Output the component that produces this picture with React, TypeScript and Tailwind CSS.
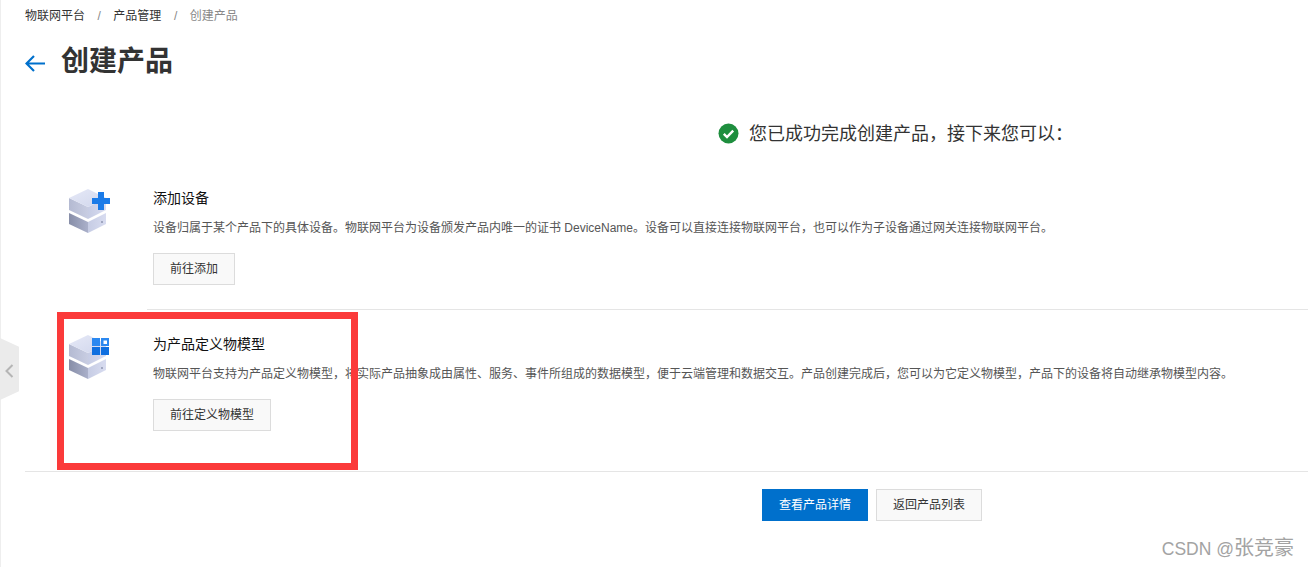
import { ReactNode } from "react"

const font = { cn: "font-['Liberation_Sans','Noto_Sans_CJK_SC',sans-serif]" }

function Cube({ id, children }: { id: string; children: ReactNode }) {
    return (
        <svg width="44" height="44" viewBox="0 0 44 44" className="block">
            <defs>
                <linearGradient id={`${id}-top`} x1="0" y1="0" x2="1" y2="1">
                    <stop offset="0" stopColor="#e6e9f7" />
                    <stop offset="1" stopColor="#d0d6ec" />
                </linearGradient>
                <linearGradient id={`${id}-upper`} x1="0" y1="0" x2="1" y2="0">
                    <stop offset="0" stopColor="#b4bad2" />
                    <stop offset="1" stopColor="#c8cde2" />
                </linearGradient>
                <linearGradient id={`${id}-lower`} x1="0" y1="0" x2="1" y2="0">
                    <stop offset="0" stopColor="#878ea8" />
                    <stop offset="1" stopColor="#aab0ca" />
                </linearGradient>
                <linearGradient id={`${id}-right`} x1="0" y1="0" x2="1" y2="0">
                    <stop offset="0" stopColor="#c6cce4" />
                    <stop offset="1" stopColor="#d8dcf0" />
                </linearGradient>
            </defs>
            <path d="M0 24 L19 33 V44 L0 35 Z" fill={`url(#${id}-lower)`} />
            <path d="M19 33 L37 24 V35 L19 44 Z" fill={`url(#${id}-right)`} />
            <circle cx="33" cy="33" r="1" fill="#8f96b0" />
            <path d="M0 9 L19 18 V30 L0 21 Z" fill={`url(#${id}-upper)`} />
            <path d="M19 18 L37 9 V21 L19 30 Z" fill={`url(#${id}-right)`} />
            <path d="M0 9 L19 0 L37 9 L19 18 Z" fill={`url(#${id}-top)`} />
            {children}
        </svg>
    )
}

function Step({ icon, title, desc, action }: { icon: ReactNode; title: string; desc: ReactNode; action: string }) {
    return (
        <div className="flex">
            <div className="w-[128px] shrink-0 pl-[44px]">{icon}</div>
            <div className="flex-1">
                <h3 className="text-[14px] leading-[18px] text-[#111]">{title}</h3>
                <p className="mt-[12px] text-[12px] leading-[18px] text-[#555] whitespace-nowrap">{desc}</p>
                <button className="mt-[16px] block h-[32px] px-[16px] border border-[#dcdcdc] bg-[#f9f9f9] text-[12px] text-[#333]">
                    {action}
                </button>
            </div>
        </div>
    )
}

export default function App() {
    return (
        <div className={`relative h-[567px] w-[1308px] overflow-hidden bg-white ${font.cn}`}>
            <div className="absolute left-0 top-0 h-full w-[1px] bg-[#eeeeee]" />

            {/* collapse handle */}
            <div className="absolute left-0 top-[338px] flex h-[62px] w-[19px] items-center justify-center bg-[#ebebeb] [clip-path:polygon(0_0,100%_14%,100%_86%,0_100%)]">
                <svg width="9" height="14" viewBox="0 0 9 14" fill="none" stroke="#b5b5b5" strokeWidth="2" className="mt-[4px]">
                    <path d="M7.5 1 L1.5 7 L7.5 13" />
                </svg>
            </div>

            <div className="pl-[25px]">
                <nav className="flex h-[30px] items-center pt-[2px] text-[12px] text-[#333]">
                    <span>物联网平台</span>
                    <span className="mx-[12.5px] text-[#888]">/</span>
                    <span>产品管理</span>
                    <span className="mx-[12.5px] text-[#888]">/</span>
                    <span className="text-[#888]">创建产品</span>
                </nav>

                <div className="mt-[13px] flex h-[38px] items-center">
                    <svg width="20" height="17" viewBox="0 0 20 17" fill="none" stroke="#0070cc" strokeWidth="2.2" className="mt-[2px]">
                        <path d="M20 8.5 H2 M9 1 L1.5 8.5 L9 16" />
                    </svg>
                    <h1 className="ml-[16px] text-[28px] font-bold leading-[38px] text-[#333]">创建产品</h1>
                </div>

                <div className="mt-[38px] ml-[693px] flex h-[28px] items-center">
                    <svg width="21" height="21" viewBox="0 0 21 21">
                        <circle cx="10.5" cy="10.5" r="10" fill="#1e8e3e" />
                        <path d="M5.8 10.8 L9 14 L15.2 7.6" fill="none" stroke="#ffffff" strokeWidth="2.4" />
                    </svg>
                    <span className="ml-[10px] mt-[1px] text-[18px] leading-[28px] text-[#333] whitespace-nowrap">您已成功完成创建产品，接下来您可以：</span>
                </div>

                <div className="mt-[42px] h-[120px]">
                    <Step
                        icon={
                            <Cube id="a">
                                <path d="M29 3 H35 V9 H41 V15 H35 V21 H29 V15 H23 V9 H29 Z" fill="#1b7be8" />
                            </Cube>
                        }
                        title="添加设备"
                        desc="设备归属于某个产品下的具体设备。物联网平台为设备颁发产品内唯一的证书 DeviceName。设备可以直接连接物联网平台，也可以作为子设备通过网关连接物联网平台。"
                        action="前往添加"
                    />
                </div>

                <div className="ml-[122px] h-[1px] bg-[#e5e5e5]" />

                <div className="pt-[25px] h-[161px]">
                    <Step
                        icon={
                            <Cube id="b">
                                <rect x="23" y="3" width="8" height="8" fill="#2b88f0" />
                                <rect x="32" y="3" width="8" height="8" fill="#2b88f0" />
                                <rect x="34.5" y="5.5" width="3.5" height="3.5" fill="#ffffff" />
                                <rect x="23" y="12" width="8" height="8" fill="#0f6fe0" />
                                <rect x="32" y="12" width="8" height="8" fill="#0f6fe0" />
                            </Cube>
                        }
                        title="为产品定义物模型"
                        desc="物联网平台支持为产品定义物模型，将实际产品抽象成由属性、服务、事件所组成的数据模型，便于云端管理和数据交互。产品创建完成后，您可以为它定义物模型，产品下的设备将自动继承物模型内容。"
                        action="前往定义物模型"
                    />
                </div>

                <div className="h-[1px] bg-[#e5e5e5]" />

                <div className="mt-[17px] ml-[737px] flex gap-[8px]">
                    <button className="h-[32px] w-[106px] bg-[#0070cc] text-[12px] text-white">查看产品详情</button>
                    <button className="h-[32px] w-[106px] border border-[#dcdcdc] bg-[#f9f9f9] text-[12px] text-[#333]">返回产品列表</button>
                </div>
            </div>

            {/* annotation drawn over the screenshot */}
            <div className="absolute left-[57px] top-[312px] h-[158px] w-[301px] border-[7px] border-[#fb3a3a]" />

            {/* watermark */}
            <div className="absolute right-[14px] top-[535px] text-[20px] leading-[26px] text-[#a3a3a3]">
                <span className="text-[17.5px]">CSDN @</span>张竞豪
            </div>
        </div>
    )
}
